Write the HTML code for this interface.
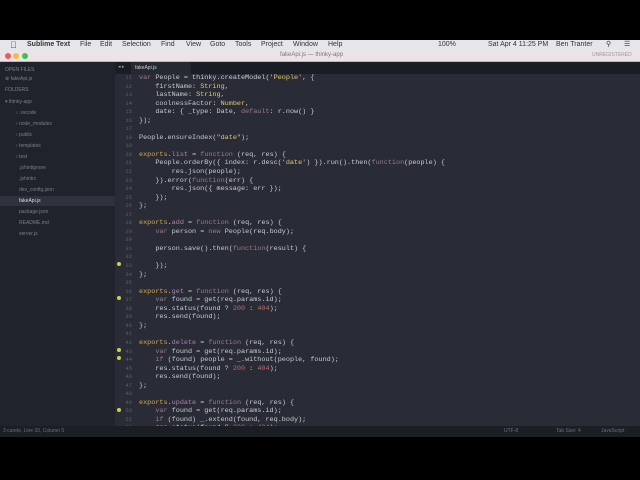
<!DOCTYPE html>
<html><head><style>
*{margin:0;padding:0;box-sizing:border-box}
body{width:640px;height:480px;background:#000;position:relative;overflow:hidden;font-family:"Liberation Sans",sans-serif}
.mb{position:absolute;top:40px;left:0;width:640px;height:10px;background:#e4e6ea;font-size:7px;color:#333;line-height:10px}
.mb span{position:absolute;top:0}
.tb{position:absolute;top:50px;left:0;width:640px;height:12px;background:#ebe3e8;border-bottom:1px solid #bbb}
.dot{position:absolute;top:3px;width:6px;height:6px;border-radius:50%}
.side{position:absolute;top:62px;left:0;width:115px;height:364px;background:#20232b}
.side div{position:absolute;font-size:5px;color:#7a7f8a;white-space:nowrap}
.tabs{position:absolute;top:62px;left:115px;width:525px;height:12px;background:#1b1d24}
.tab{position:absolute;left:16px;top:0;width:60px;height:12px;background:#262932;font-size:5px;color:#ccc;padding:3px 4px}
.ed{position:absolute;top:74px;left:115px;width:525px;height:352px;background:#292c36;overflow:hidden}
.code{position:absolute;left:24px;top:0;font-family:"Liberation Mono",monospace;font-size:6.8px;line-height:8.55px;color:#c9ccd2;white-space:pre}
.gut{position:absolute;left:0;width:17px;top:0;font-family:"Liberation Mono",monospace;font-size:5.5px;line-height:8.55px;color:#5a5f6b;text-align:right;white-space:pre}
.k{color:#d9a64e}.f{color:#9a7a8a}.s{color:#e6c76b}.n{color:#c06a6a}.v{color:#b07fb0}
.sb{position:absolute;top:426px;left:0;width:640px;height:11px;background:#1c1e25;font-size:5px;color:#6b6f7a;line-height:11px}
.mk{position:absolute;left:2px;width:4px;height:4px;border-radius:50%;background:#c6d44a}
</style></head><body>
<div class="mb">
<span style="left:10px;font-size:9px">&#63743;</span>
<span style="left:27px;font-weight:bold">Sublime Text</span>
<span style="left:80px">File</span><span style="left:100px">Edit</span><span style="left:122px">Selection</span><span style="left:161px">Find</span><span style="left:186px">View</span><span style="left:210px">Goto</span><span style="left:235px">Tools</span><span style="left:261px">Project</span><span style="left:293px">Window</span><span style="left:328px">Help</span>
<span style="left:438px">100%</span><span style="left:488px">Sat Apr 4 11:25 PM</span><span style="left:556px">Ben Tranter</span><span style="left:606px">&#9906;</span><span style="left:624px">&#9776;</span>
</div>
<div class="tb">
<div class="dot" style="left:5px;background:#f05a55"></div><div class="dot" style="left:13px;background:#f4be3c"></div><div class="dot" style="left:22px;background:#3bc64a"></div>
<span style="position:absolute;left:280px;top:2px;font-size:6px;color:#777">fakeApi.js — thinky-app</span>
<span style="position:absolute;left:592px;top:2px;font-size:5px;color:#999">UNREGISTERED</span>
</div>
<div class="side">
<div style="left:5px;top:5px">OPEN FILES</div>
<div style="left:5px;top:14px">⊗ fakeApi.js</div>
<div style="left:5px;top:25px">FOLDERS</div>
<div style="left:5px;top:37px">▾ thinky-app</div>
<div style="left:16px;top:48px">› .vscode</div>
<div style="left:16px;top:59px">› node_modules</div>
<div style="left:16px;top:70px">› public</div>
<div style="left:16px;top:81px">› templates</div>
<div style="left:16px;top:92px">› test</div>
<div style="left:19px;top:103px">.jshintignore</div>
<div style="left:19px;top:114px">.jshintrc</div>
<div style="left:19px;top:125px">dev_config.json</div>
<div style="left:0;top:134px;width:115px;height:10px;background:#2e323d"></div>
<div style="left:19px;top:136px;color:#dde">fakeApi.js</div>
<div style="left:19px;top:147px">package.json</div>
<div style="left:19px;top:158px">README.md</div>
<div style="left:19px;top:169px">server.js</div>
</div>
<div class="tabs"><span style="position:absolute;left:3px;top:2px;font-size:5px;color:#999">◂ ▸</span><div class="tab">fakeApi.js</div></div>
<div class="ed">
<div class="mk" style="top:188px"></div><div class="mk" style="top:222px"></div><div class="mk" style="top:274px"></div><div class="mk" style="top:282px"></div><div class="mk" style="top:334px"></div>
<div class="gut">11
12
13
14
15
16
17
18
19
20
21
22
23
24
25
26
27
28
29
30
31
32
33
34
35
36
37
38
39
40
41
42
43
44
45
46
47
48
49
50
51
52</div>
<div class="code" style="top:0"><span class="f">var</span> People = thinky.createModel(<span class="s">'People'</span>, {
    firstName: <span class="s">String</span>,
    lastName: <span class="s">String</span>,
    coolnessFactor: <span class="s">Number</span>,
    date: { _type: Date, <span class="f">default</span>: r.now() }
});

People.ensureIndex(<span class="s">"date"</span>);

<span class="k">exports</span>.<span class="v">list</span> = <span class="f">function</span> (req, res) {
    People.orderBy({ index: r.desc(<span class="s">'date'</span>) }).run().then(<span class="f">function</span>(people) {
        res.json(people);
    }).error(<span class="f">function</span>(err) {
        res.json({ message: err });
    });
};

<span class="k">exports</span>.<span class="v">add</span> = <span class="f">function</span> (req, res) {
    <span class="f">var</span> person = <span class="f">new</span> People(req.body);

    person.save().then(<span class="f">function</span>(result) {

    });
};

<span class="k">exports</span>.<span class="v">get</span> = <span class="f">function</span> (req, res) {
    <span class="f">var</span> found = get(req.params.id);
    res.status(found ? <span class="n">200</span> : <span class="n">404</span>);
    res.send(found);
};

<span class="k">exports</span>.<span class="v">delete</span> = <span class="f">function</span> (req, res) {
    <span class="f">var</span> found = get(req.params.id);
    <span class="f">if</span> (found) people = _.without(people, found);
    res.status(found ? <span class="n">200</span> : <span class="n">404</span>);
    res.send(found);
};

<span class="k">exports</span>.<span class="v">update</span> = <span class="f">function</span> (req, res) {
    <span class="f">var</span> found = get(req.params.id);
    <span class="f">if</span> (found) _.extend(found, req.body);
    res.status(found ? <span class="n">200</span> : <span class="n">404</span>);</div>
</div>
<div class="sb"><span style="position:absolute;left:3px">3 carets, Line 33, Column 5</span><span style="position:absolute;left:504px">UTF-8</span><span style="position:absolute;left:556px">Tab Size: 4</span><span style="position:absolute;left:601px">JavaScript</span></div>
</body></html>
